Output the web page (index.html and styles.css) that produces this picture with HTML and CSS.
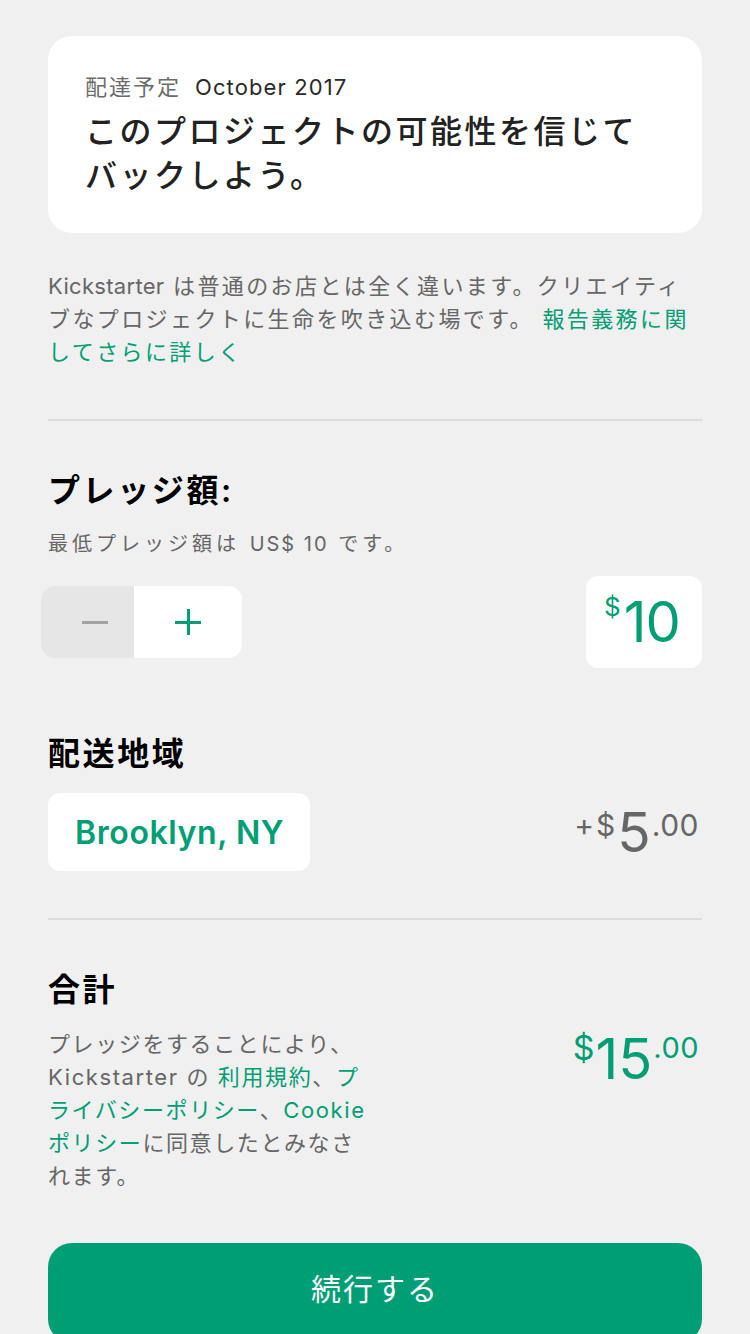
FILE: index.html
```html
<!DOCTYPE html>
<html lang="ja">
<head>
<meta charset="utf-8">
<link rel="stylesheet" href="styles.css">
</head>
<body>
<main class="page">
  <section class="card">
    <p class="card-meta"><span class="meta-label">配達予定</span><span class="meta-date">October 2017</span></p>
    <h1 class="card-title">このプロジェクトの可能性を信じてバックしよう。</h1>
  </section>

  <p class="notice"><span class="latin">Kickstarter</span> は普通のお店とは全く違います。クリエイティ<br>ブなプロジェクトに生命を吹き込む場です。 <a class="link">報告義務に関<br>してさらに詳しく</a></p>

  <hr class="divider">

  <section class="block">
    <h2 class="heading">プレッジ額:</h2>
    <p class="sub">最低プレッジ額は <span class="latin">US$ 10</span> です。</p>
    <div class="row pledge-row">
      <div class="stepper">
        <div class="step step-minus"><span class="bar"></span></div>
        <div class="step step-plus"><span class="bar"></span><span class="bar vert"></span></div>
      </div>
      <div class="amount-box"><span class="cur">$</span><span class="amount">10</span></div>
    </div>
  </section>

  <section class="block ship">
    <h2 class="heading">配送地域</h2>
    <div class="row ship-row">
      <div class="location">Brooklyn, NY</div>
      <div class="price grey"><span class="plus">+$</span><span class="big">5</span><span class="cents">.00</span></div>
    </div>
  </section>

  <hr class="divider divider-low">

  <section class="block">
    <h2 class="heading">合計</h2>
    <div class="row total-row">
      <p class="terms">プレッジをすることにより、Kickstarter の <a class="link">利用規約</a>、<a class="link">プライバシーポリシー</a>、<a class="link">Cookie ポリシー</a>に同意したとみなされます。</p>
      <div class="price green total"><span class="plus">$</span><span class="big">15</span><span class="cents">.00</span></div>
    </div>
  </section>

  <button class="cta">続行する</button>
</main>
</body>
</html>
```

FILE: styles.css
```css
* { box-sizing: border-box; }
html, body { margin: 0; padding: 0; }
body {
  background: #f0f0f0;
  font-family: Inter, "Noto Sans CJK JP", sans-serif;
  color: #000;
}
.page {
  padding: 36px 48px 0;
  display: flex;
  flex-direction: column;
}
.card {
  background: #fff;
  border-radius: 24px;
  padding: 36px 37px 35px;
}
.card-meta {
  margin: 0;
  font-size: 22px;
  line-height: 30px;
  display: flex;
  gap: 14px;
}
.meta-label { color: #6b6b6b; letter-spacing: 2px; }
.meta-date { color: #2a2a2a; letter-spacing: 1.1px; }
.card-title {
  margin: 8px 0 0;
  font-size: 32px;
  line-height: 44px;
  font-weight: 500;
  letter-spacing: 2.5px;
  color: #222;
}
.notice {
  margin: 37px 0 0;
  font-size: 22px;
  line-height: 33px;
  letter-spacing: 2.4px;
  color: #666;
}
.latin { letter-spacing: 0.3px; }
.link { color: #009e74; text-decoration: none; }
.divider {
  border: 0;
  height: 2px;
  background: #dcdcdc;
  margin: 50px 0 0;
}
.divider-low { margin-top: 47px; }
.block { display: flex; flex-direction: column; }
.heading {
  margin: 50px 0 0;
  font-size: 32px;
  line-height: 40px;
  font-weight: 600;
  letter-spacing: 2.6px;
}
.sub {
  margin: 18px 0 0;
  font-size: 20px;
  line-height: 30px;
  letter-spacing: 4px;
  color: #666;
}
.sub .latin { letter-spacing: 2px; }
.row {
  display: flex;
  justify-content: space-between;
  align-items: center;
}
.pledge-row { margin-top: 17px; }
.stepper {
  display: flex;
  margin-left: -7px;
  height: 72px;
  border-radius: 14px;
  overflow: hidden;
}
.step {
  position: relative;
  display: flex;
  align-items: center;
  justify-content: center;
}
.step-minus { width: 93px; background: #e6e6e6; padding-left: 14px; }
.step-plus { width: 108px; background: #fff; }
.bar {
  display: block;
  width: 26px;
  height: 3px;
  background: #a3a3a3;
}
.step-plus .bar { background: #009e74; }
.bar.vert {
  position: absolute;
  width: 3px;
  height: 26px;
}
.amount-box {
  background: #fff;
  border-radius: 12px;
  width: 116px;
  height: 92px;
  display: flex;
  align-items: flex-start;
  justify-content: center;
  padding: 16px 4px 0 0;
  color: #009e74;
}
.cur { font-size: 26px; line-height: 30px; margin-right: 3px; }
.amount { font-size: 56px; line-height: 60px; letter-spacing: -1px; }
.ship .heading { margin-top: 66px; }
.ship-row { margin-top: 19px; }
.location {
  background: #fff;
  border-radius: 12px;
  height: 78px;
  padding: 0 26px 0 27px;
  display: flex;
  align-items: center;
  font-size: 32px;
  font-weight: 600;
  letter-spacing: 0.6px;
  color: #009e74;
}
.price {
  display: flex;
  align-items: flex-start;
  padding-right: 3px;
}
.grey { color: #666; }
.green { color: #009e74; }
.price .plus { font-size: 30px; line-height: 34px; margin-top: 6px; letter-spacing: 2px; }
.price .big { font-size: 55px; line-height: 60px; margin-right: 1px; }
.price .cents { font-size: 30px; line-height: 34px; margin-top: 6px; letter-spacing: 0.5px; }
.total-row { margin-top: 18px; align-items: flex-start; }
.terms {
  margin: 0;
  width: 324px;
  font-size: 22px;
  line-height: 33px;
  letter-spacing: 1.6px;
  color: #666;
}
.total { margin-top: 1px; }
.total .big { font-size: 56px; line-height: 60px; letter-spacing: 0; }
.total .plus { font-size: 34px; margin-top: 2px; letter-spacing: 1px; }
.total .cents { font-size: 29px; margin-top: 2px; }
.cta {
  margin-top: 50px;
  height: 100px;
  border: 0;
  border-radius: 24px;
  background: #009e74;
  color: #fff;
  font-family: inherit;
  font-size: 30px;
  letter-spacing: 2px;
  line-height: 92px;
  padding: 0 0 8px;
}
```
